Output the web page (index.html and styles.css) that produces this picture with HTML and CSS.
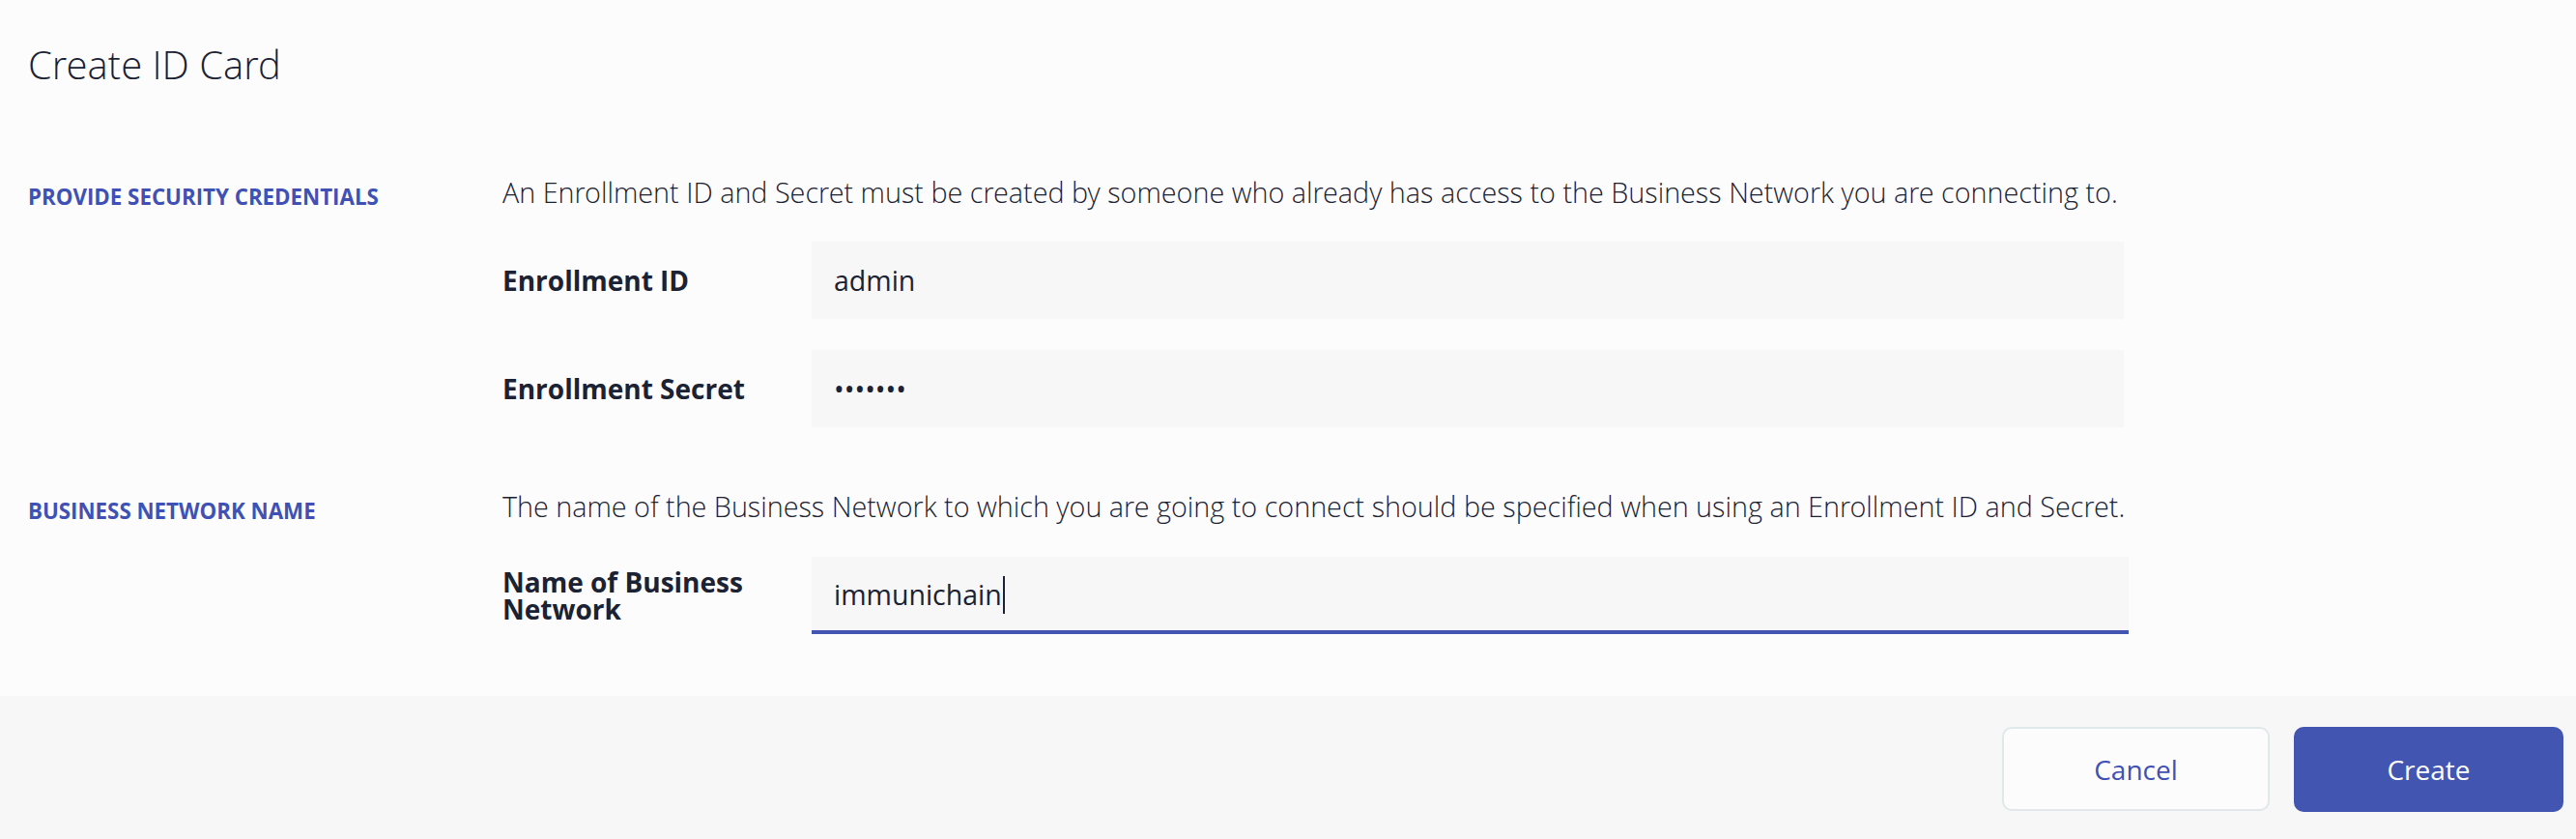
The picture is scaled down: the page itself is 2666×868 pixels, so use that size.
FILE: index.html
```html
<!DOCTYPE html>
<html lang="en">
<head>
<meta charset="utf-8">
<title>Create ID Card</title>
<link rel="stylesheet" href="styles.css">
</head>
<body>
<div class="dialog">
  <header class="header">
    <h1 class="title">Create ID Card</h1>
  </header>
  <main class="content">
    <section class="section section-first">
      <h2 class="section-label">PROVIDE SECURITY CREDENTIALS</h2>
      <div class="section-body">
        <p class="desc">An Enrollment ID and Secret must be created by someone who already has access to the Business Network you are connecting to.</p>
        <div class="field-row">
          <label class="field-label">Enrollment ID</label>
          <div class="field"><span class="field-value">admin</span></div>
        </div>
        <div class="field-row">
          <label class="field-label">Enrollment Secret</label>
          <div class="field"><span class="field-value dots">•••••••</span></div>
        </div>
      </div>
    </section>
    <section class="section section-second">
      <h2 class="section-label">BUSINESS NETWORK NAME</h2>
      <div class="section-body">
        <p class="desc">The name of the Business Network to which you are going to connect should be specified when using an Enrollment ID and Secret.</p>
        <div class="field-row">
          <label class="field-label wrap">Name of Business Network</label>
          <div class="field focused"><span class="field-value">immunichain</span><span class="caret"></span></div>
        </div>
      </div>
    </section>
  </main>
  <footer class="footer">
    <button class="btn btn-cancel" type="button">Cancel</button>
    <button class="btn btn-create" type="button">Create</button>
  </footer>
</div>
</body>
</html>
```
FILE: styles.css
```css
* { box-sizing: border-box; }

html, body {
  margin: 0;
  padding: 0;
}

body {
  background: #fcfcfc;
  font-family: "Open Sans", "Liberation Sans", sans-serif;
  color: #1a2233;
  width: 2666px;
  height: 868px;
  overflow: hidden;
}

.dialog {
  display: flex;
  flex-direction: column;
  height: 868px;
}

.header {
  padding: 40px 0 0 29px;
}

.title {
  margin: 0;
  font-family: "Open Sans Light", "Open Sans", "Liberation Sans", sans-serif;
  font-size: 40px;
  font-weight: 300;
  line-height: 54px;
  color: #1a2233;
}

.content {
  flex: 1;
  padding-left: 29px;
}

.section {
  display: grid;
  grid-template-columns: 491px 1678px;
}

.section-first {
  margin-top: 86px;
}

.section-second {
  margin-top: 63px;
}

.section-label {
  margin: 0;
  padding-top: 5px;
  font-size: 22.3px;
  font-weight: 700;
  line-height: 38px;
  color: #3f51b5;
}

.section-body {
  display: flex;
  flex-direction: column;
  gap: 32px;
}

.desc {
  margin: 0;
  font-family: "Open Sans Light", "Open Sans", "Liberation Sans", sans-serif;
  font-size: 28.75px;
  font-weight: 300;
  line-height: 38px;
  white-space: nowrap;
  color: #1a2233;
}

.field-row {
  display: flex;
  align-items: center;
}

.field-label {
  width: 320px;
  flex: none;
  padding-right: 40px;
  font-size: 28px;
  font-weight: 700;
  color: #1a2233;
}

.field-label.wrap {
  line-height: 28px;
}

.field {
  flex: 1;
  height: 80px;
  background: #f7f7f7;
  display: flex;
  align-items: center;
  padding-left: 23px;
  font-size: 28.5px;
  font-weight: 400;
  color: #1a2233;
}

.field.focused {
  height: 80px;
  margin-right: -5px;
  margin-top: 1px;
  border-bottom: 4px solid #4255b1;
  padding-top: 2px;
}

.dots {
  letter-spacing: 0;
}

.caret {
  display: inline-block;
  width: 2px;
  height: 39px;
  background: #1a2233;
  margin-left: 1px;
}

.footer {
  height: 148px;
  background: #f7f7f7;
  display: flex;
  justify-content: flex-end;
  align-items: flex-start;
  gap: 25px;
  padding: 32px 13px 0 0;
}

.btn {
  font-family: "Open Sans", "Liberation Sans", sans-serif;
  font-size: 28px;
  font-weight: 400;
  border-radius: 10px;
  cursor: pointer;
}

.btn-cancel {
  width: 277px;
  height: 87px;
  background: #fcfcfc;
  border: 2px solid #e1e8ea;
  color: #3f51b5;
}

.btn-create {
  width: 279px;
  height: 88px;
  background: #4255b1;
  border: none;
  color: #ffffff;
}
```
